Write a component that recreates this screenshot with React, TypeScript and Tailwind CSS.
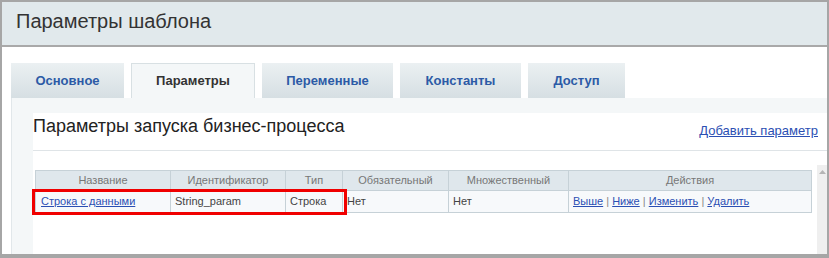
const tabs = [
  { label: "Основное", active: false, width: "w-[113px]" },
  { label: "Параметры", active: true, width: "w-[124px]" },
  { label: "Переменные", active: false, width: "w-[131px]" },
  { label: "Константы", active: false, width: "w-[121px]" },
  { label: "Доступ", active: false, width: "w-[97px]" },
];

const columns = [
  { title: "Название", width: "w-[135px]" },
  { title: "Идентификатор", width: "w-[115px]" },
  { title: "Тип", width: "w-[57px]" },
  { title: "Обязательный", width: "w-[106px]" },
  { title: "Множественный", width: "w-[120px]" },
  { title: "Действия", width: "" },
];

function Link({ children }: { children: React.ReactNode }) {
  return <a className="text-[#2b4fb3] underline cursor-pointer">{children}</a>;
}

export default function App() {
  return (
    <div className="relative w-[829px] h-[258px] bg-white border-2 border-b-4 border-[#a6a6a6] flex flex-col overflow-hidden font-['Liberation_Sans',Arial,sans-serif]">
      {/* Заголовок окна */}
      <div className="h-[45px] shrink-0 bg-[#e1e9ec] border-b-2 border-[#a9a9a9] pl-[14px] pt-[7px]">
        <h1 className="text-[20px] leading-[24px] text-[#333]">Параметры шаблона</h1>
      </div>

      <div className="flex-1 flex flex-col pl-[9px] pt-[16px] min-h-0">
        {/* Вкладки */}
        <div className="flex gap-[7px] h-[35px] shrink-0">
          {tabs.map((t) =>
            t.active ? (
              <div
                key={t.label}
                className={`${t.width} flex items-center justify-center bg-[#f4f7f8] border border-b-0 border-[#d8e0e3] text-[13px] font-bold text-[#333]`}
              >
                {t.label}
              </div>
            ) : (
              <div
                key={t.label}
                className={`${t.width} flex items-center justify-center bg-gradient-to-b from-[#ebf0f2] to-[#d6dfe3] text-[13px] font-bold text-[#2c5aa6]`}
              >
                {t.label}
              </div>
            )
          )}
        </div>

        {/* Содержимое вкладки */}
        <div className="flex-1 flex bg-[#f4f7f8] border-l border-[#e1e7ea] pl-[21px] pt-[15px] min-h-0">
          <div className="flex-1 flex flex-col bg-white min-h-0">
            <div className="h-[38px] shrink-0 flex justify-between items-start border-b border-[#dfe4e7] pr-[9px]">
              <h2 className="text-[18px] leading-[26px] text-[#222]">Параметры запуска бизнес-процесса</h2>
              <div className="mt-[10px] text-[13px] leading-[16px]">
                <Link>Добавить параметр</Link>
              </div>
            </div>

            <div className="flex-1 flex mt-[14px] min-h-0">
              <div className="flex-1 pl-[2px] pt-[5px] pr-[5px]">
                <table className="w-[777px] border-collapse text-[11px] table-fixed">
                  <thead>
                    <tr className="h-[20px] bg-[#dfe7ec]">
                      {columns.map((c) => (
                        <th
                          key={c.title}
                          className={`${c.width} border border-[#c6d1d7] font-normal text-[#777] text-center`}
                        >
                          {c.title}
                        </th>
                      ))}
                    </tr>
                  </thead>
                  <tbody>
                    <tr className="h-[22px] bg-[#f7f9fb] text-[#444]">
                      <td className="border border-[#c6d1d7] pl-[5px]">
                        <Link>Строка с данными</Link>
                      </td>
                      <td className="border border-[#c6d1d7] pl-[4px]">String_param</td>
                      <td className="border border-[#c6d1d7] pl-[4px]">Строка</td>
                      <td className="border border-[#c6d1d7] pl-[4px]">Нет</td>
                      <td className="border border-[#c6d1d7] pl-[4px]">Нет</td>
                      <td className="border border-[#c6d1d7] pl-[4px] text-[#888]">
                        <Link>Выше</Link> | <Link>Ниже</Link> | <Link>Изменить</Link> | <Link>Удалить</Link>
                      </td>
                    </tr>
                  </tbody>
                </table>
              </div>
              {/* Полоса прокрутки */}
              <div className="w-[10px] shrink-0 bg-[#efefef] flex justify-center pt-[5px]">
                <svg width="7" height="4" viewBox="0 0 7 4">
                  <path d="M0 4 L3.5 0 L7 4 Z" fill="#b5b5b5" />
                </svg>
              </div>
            </div>
          </div>
        </div>
      </div>

      {/* Красная рамка-выделение */}
      <div className="absolute left-[30px] top-[187px] w-[315px] h-[26px] border-[3px] border-[#f00000] pointer-events-none" />
    </div>
  );
}
